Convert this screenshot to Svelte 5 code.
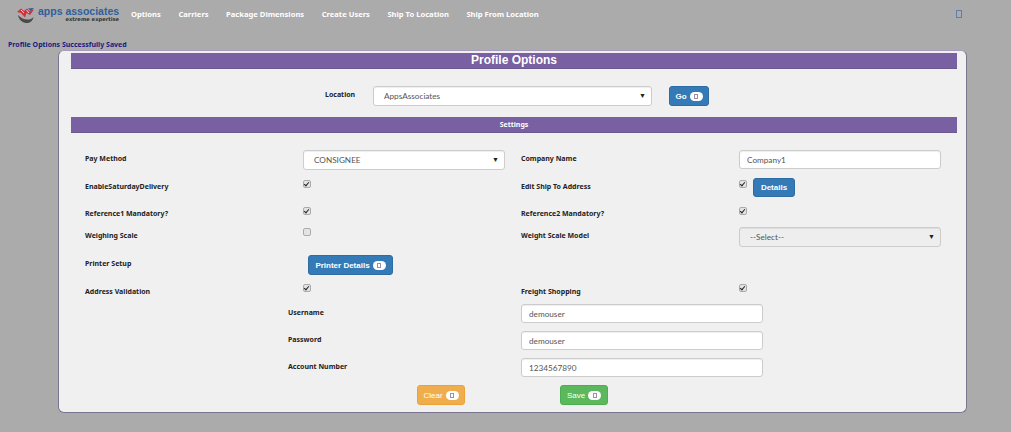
<script>
  const navLinks = ['Options', 'Carriers', 'Package Dimensions', 'Create Users', 'Ship To Location', 'Ship From Location'];
</script>

<nav class="navbar">
  <div class="brand">
    <svg class="logo" width="20" height="20" viewBox="0 0 20 20">
      <path d="M2 10 C3 16 8 18.500 12 18 C15 17.500 17 15 17.500 12 C15 15.500 7 16 2 10Z" fill="#4a4a4a"/>
      <path d="M1 7 L5 3.500 L8 6 L11 3.500 L13.500 6 L18 4.500 L14 10 L10.500 8 L9 12.500 L5 8Z" fill="#d0313c"/>
      <path d="M5 5 L8 8 M10.500 5 L13 8" stroke="#f3d6d6" stroke-width="1" fill="none"/>
      <path d="M12 3.500 L18 3 L15 6Z" fill="#2d5b96"/>
    </svg>
    <div class="brand-text">
      <span class="brand-name">apps associates</span>
      <span class="brand-tag">extreme expertise</span>
    </div>
  </div>
  <ul class="links">
    {#each navLinks as link}
      <li>{link}</li>
    {/each}
  </ul>
  <span class="nav-icon"></span>
</nav>

<p class="message">Profile Options Successfully Saved</p>

<main class="panel">
  <h1 class="bar title">Profile Options</h1>

  <div class="location">
    <label class="label loc-label" for="loc">Location</label>
    <div class="select-wrap loc-select">
      <select id="loc"><option>AppsAssociates</option></select>
    </div>
    <button class="btn blue go">Go <span class="badge"><i></i></span></button>
  </div>

  <h2 class="bar subtitle">Settings</h2>

  <div class="form">
    <span class="label">Pay Method</span>
    <div class="select-wrap"><select><option>CONSIGNEE</option></select></div>
    <span class="label">Company Name</span>
    <input class="field" value="Company1" />

    <span class="label">EnableSaturdayDelivery</span>
    <div><input type="checkbox" class="check" checked /></div>
    <span class="label">Edit Ship To Address</span>
    <div class="with-btn">
      <input type="checkbox" class="check" checked />
      <button class="btn blue details">Details</button>
    </div>

    <span class="label">Reference1 Mandatory?</span>
    <div><input type="checkbox" class="check" checked /></div>
    <span class="label">Reference2 Mandatory?</span>
    <div><input type="checkbox" class="check" checked /></div>

    <span class="label">Weighing Scale</span>
    <div><input type="checkbox" class="check low" /></div>
    <span class="label">Weight Scale Model</span>
    <div class="select-wrap disabled"><select><option>--Select--</option></select></div>

    <span class="label">Printer Setup</span>
    <div><button class="btn blue printer">Printer Details <span class="badge"><i></i></span></button></div>
    <span></span>
    <span></span>

    <span class="label">Address Validation</span>
    <div><input type="checkbox" class="check low" checked /></div>
    <span class="label">Freight Shopping</span>
    <div><input type="checkbox" class="check low" checked /></div>
  </div>

  <div class="credentials">
    <span class="label">Username</span>
    <input class="field" value="demouser" />
    <span class="label">Password</span>
    <input class="field" value="demouser" />
    <span class="label">Account Number</span>
    <input class="field" value="1234567890" />
  </div>

  <div class="actions">
    <button class="btn orange">Clear <span class="badge"><i></i></span></button>
    <button class="btn green">Save <span class="badge"><i></i></span></button>
  </div>
</main>

<style>
  :global(body) {
    margin: 0;
    background: #ababab;
    font-family: "Noto Sans", sans-serif;
  }
  .navbar {
    display: flex;
    align-items: center;
    height: 28px;
    padding-left: 16px;
  }
  .brand {
    display: flex;
    align-items: center;
    gap: 2px;
    width: 115px;
  }
  .logo {
    flex: none;
    margin-top: 2px;
  }
  .brand-text {
    display: flex;
    flex-direction: column;
    align-items: flex-end;
    line-height: 1;
  }
  .brand-name {
    font: bold 10.5px/10px "Liberation Sans", sans-serif;
    color: #2f5f9e;
    white-space: nowrap;
  }
  .brand-tag {
    font: bold 5.2px/6px "DejaVu Sans", sans-serif;
    color: #333;
    white-space: nowrap;
  }
  .links {
    display: flex;
    gap: 17.5px;
    list-style: none;
    margin: 0;
    padding: 0;
    color: #fff;
    font: bold 7.6px "Noto Sans", sans-serif;
  }
  .nav-icon {
    position: absolute;
    left: 956px;
    top: 10px;
    width: 4px;
    height: 6px;
    border: 1px solid #5d7fa8;
  }
  .message {
    margin: 12px 0 0 8px;
    height: 10px;
    font: bold 7px/10px "Noto Sans", sans-serif;
    color: #1a1a80;
  }
  .panel {
    box-sizing: border-box;
    width: 909px;
    height: 363px;
    margin: 0 0 0 58px;
    padding: 2px 9px 0 12px;
    background: #f0f0f1;
    border: 1px solid #7b7690;
    border-top-color: #a99bc0;
    border-radius: 6px;
  }
  .bar {
    box-sizing: border-box;
    margin: 0;
    background: #7860a3;
    color: #fff;
    text-align: center;
    font-weight: bold;
    border-bottom: 1px solid #6a5a90;
  }
  .title {
    height: 16px;
    font: bold 12px/15px "Liberation Sans", sans-serif;
  }
  .subtitle {
    height: 16px;
    font-size: 7px;
    line-height: 15px;
  }
  .location {
    display: flex;
    align-items: flex-start;
    height: 48px;
    padding: 17px 0 0 254px;
    box-sizing: border-box;
  }
  .loc-label {
    width: 48px;
    padding-top: 7px;
  }
  .loc-select {
    width: 279px;
    margin-right: 17px;
  }
  .label {
    font-size: 7px;
    line-height: 12px;
    font-weight: bold;
    color: #222;
    padding-top: 3px;
  }
  .form {
    display: grid;
    grid-template-columns: repeat(4, 218px);
    grid-template-rows: 28px 27px 22px 28px 28px 21px;
    margin: 17px 0 0 14px;
  }
  .form > :nth-child(4n), .form > .select-wrap {
    width: 202px;
  }
  .form > div {
    display: flex;
    align-items: flex-start;
    height: 20px;
  }
  .select-wrap {
    position: relative;
    height: 20px;
  }
  .select-wrap::after {
    content: "▼";
    position: absolute;
    right: 6px;
    top: 5px;
    font-size: 7px;
    color: #222;
    pointer-events: none;
  }
  select, .field {
    display: block;
    box-sizing: border-box;
    width: 100%;
    height: 20px;
    margin: 0;
    padding: 0 10px;
    background: #fff;
    border: 1px solid #ccc;
    border-radius: 3px;
    font: 8.2px "Lato", sans-serif;
    color: #555;
    appearance: none;
    box-shadow: inset 0 1px 1px rgba(0, 0, 0, 0.07);
  }
  .field {
    padding: 0 7px;
    height: 19px;
  }
  .disabled select {
    background: #eee;
  }
  .check {
    appearance: none;
    display: block;
    position: relative;
    box-sizing: border-box;
    width: 8px;
    height: 8px;
    margin: 2px 0 0;
    background: #e4e4e4;
    border: 1px solid #aaa;
    border-radius: 2px;
  }
  .check.low {
    margin-top: 1px;
  }
  .check:checked::after {
    content: "";
    position: absolute;
    left: 1px;
    top: 0;
    width: 2px;
    height: 4px;
    border: solid #222;
    border-width: 0 1px 1px 0;
    transform: rotate(40deg);
  }
  .with-btn {
    gap: 6px;
  }
  .btn {
    height: 20px;
    padding: 0;
    border: 1px solid transparent;
    border-radius: 3px;
    color: #fff;
    font: bold 8px "Liberation Sans", sans-serif;
    display: inline-flex;
    align-items: center;
    justify-content: center;
    gap: 3px;
  }
  .blue {
    background: #337ab7;
    border-color: #2e6da4;
  }
  .orange {
    width: 48px;
    background: #f0ad4e;
    border-color: #eea236;
    font-weight: normal;
  }
  .green {
    width: 48px;
    background: #5cb85c;
    border-color: #4cae4c;
    font-weight: normal;
  }
  .go {
    width: 40px;
  }
  .details {
    width: 42px;
    height: 19px;
  }
  .printer {
    width: 85px;
    margin-left: 5px;
  }
  .badge {
    display: inline-flex;
    align-items: center;
    justify-content: center;
    width: 13px;
    height: 9px;
    border-radius: 5px;
    background: #fff;
  }
  .badge i {
    box-sizing: border-box;
    width: 4px;
    height: 5px;
    border: 1px solid #a08fa8;
  }
  .credentials {
    display: grid;
    grid-template-columns: 233px 242px;
    grid-auto-rows: 27px;
    margin-left: 217px;
  }
  .actions {
    display: flex;
    gap: 95px;
    margin: 0 0 0 346px;
  }
</style>
